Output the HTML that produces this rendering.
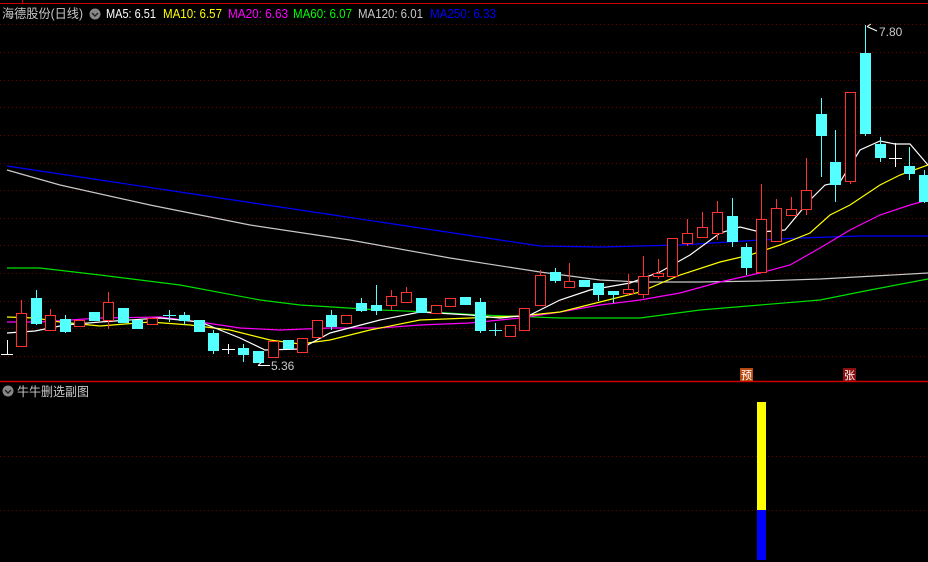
<!DOCTYPE html>
<html><head><meta charset="utf-8"><style>
html,body{margin:0;padding:0;background:#000;width:928px;height:562px;overflow:hidden}
svg{display:block}
text{font-family:"Liberation Sans","Noto Sans CJK SC",sans-serif}
</style></head><body>
<svg width="928" height="562" viewBox="0 0 928 562" xmlns="http://www.w3.org/2000/svg">
<rect width="928" height="562" fill="#000"/>
<line x1="0" y1="3.5" x2="928" y2="3.5" stroke="#c00" stroke-width="1"/>
<line x1="22.5" y1="0" x2="22.5" y2="4" stroke="#c00"/>
<g stroke="#6a0000" stroke-width="1" stroke-dasharray="1,3">
<line x1="0" y1="24.5" x2="928" y2="24.5"/><line x1="0" y1="52.5" x2="928" y2="52.5"/>
<line x1="0" y1="80.5" x2="928" y2="80.5"/><line x1="0" y1="107.5" x2="928" y2="107.5"/>
<line x1="0" y1="135.5" x2="928" y2="135.5"/><line x1="0" y1="163.5" x2="928" y2="163.5"/>
<line x1="0" y1="190.5" x2="928" y2="190.5"/><line x1="0" y1="218.5" x2="928" y2="218.5"/>
<line x1="0" y1="245.5" x2="928" y2="245.5"/><line x1="0" y1="273.5" x2="928" y2="273.5"/>
<line x1="0" y1="301.5" x2="928" y2="301.5"/><line x1="0" y1="328.5" x2="928" y2="328.5"/>
<line x1="0" y1="356.5" x2="928" y2="356.5"/>
<line x1="0" y1="456.5" x2="928" y2="456.5"/><line x1="0" y1="510.5" x2="928" y2="510.5"/>
</g>
<line x1="0" y1="381.5" x2="928" y2="381.5" stroke="#c00" stroke-width="1.5"/>

<g fill="none" stroke-width="1.2">
<polyline stroke="#0000ff" points="7,166 100,180 200,195 300,210 400,225 500,240 540,246 600,247 680,245 760,240 800,238 860,236 928,236"/>
<polyline stroke="#c8c8c8" points="7,170 60,185 150,205 250,225 350,240 450,258 540,272 600,280 640,282 700,282 760,281 820,279 928,273"/>
<polyline stroke="#00e000" points="7,268 40,268 100,275 180,285 260,300 300,305 380,310 430,312 480,315 560,318 640,318 700,310 760,305 820,300 870,290 928,279"/>
<polyline stroke="#ff00ff" points="7,322 40,322 100,318 160,317 200,322 240,328 280,330 330,328 380,328 420,325 470,323 520,318 560,312 600,305 640,300 680,293 720,282 760,273 790,265 820,248 850,230 880,215 910,205 928,200"/>
<polyline stroke="#ffff00" points="7,317 35,318 60,322 100,326 150,322 190,325 230,330 270,340 300,344 330,340 370,330 420,320 470,318 520,316 560,312 600,302 640,292 680,275 720,262 750,255 780,245 810,233 830,215 850,205 880,185 900,175 928,165"/>
<polyline stroke="#ffffff" points="7,333 35,331 65,325 100,322 160,318 200,322 240,338 265,350 300,349 330,333 380,320 420,312 470,315 500,318 530,315 560,300 590,290 630,283 660,272 690,255 720,233 740,227 760,232 785,230 810,200 825,185 840,182 860,150 880,141 895,144 910,144 928,165"/>
</g>

<g fill="#000" stroke="#ff3232" stroke-width="1">
<line x1="21.5" y1="300" x2="21.5" y2="313"/><rect x="16.5" y="313.5" width="10" height="33"/>
<line x1="50.5" y1="309" x2="50.5" y2="315"/><rect x="45.5" y="315.5" width="10" height="15"/>
<rect x="74.5" y="320.5" width="10" height="6"/>
<line x1="108.5" y1="292" x2="108.5" y2="329"/><rect x="103.5" y="302.5" width="10" height="18" />
<rect x="147.5" y="318.5" width="10" height="6"/>
<rect x="268.5" y="341.5" width="10" height="16"/>
<rect x="297.5" y="338.5" width="10" height="14"/>
<rect x="312.5" y="320.5" width="10" height="17"/>
<rect x="341.5" y="315.5" width="10" height="8"/>
<line x1="391.5" y1="290" x2="391.5" y2="310"/><rect x="386.5" y="296.5" width="10" height="9"/>
<line x1="406.5" y1="287" x2="406.5" y2="292"/><rect x="401.5" y="292.5" width="10" height="10"/>
<rect x="431.5" y="305.5" width="10" height="8"/>
<rect x="445.5" y="298.5" width="10" height="8"/>
<rect x="505.5" y="325.5" width="10" height="11"/>
<rect x="519.5" y="308.5" width="10" height="22"/>
<line x1="540.5" y1="270" x2="540.5" y2="275"/><rect x="535.5" y="275.5" width="10" height="30"/>
<line x1="569.5" y1="263" x2="569.5" y2="281"/><rect x="564.5" y="281.5" width="10" height="6"/>
<line x1="628.5" y1="274" x2="628.5" y2="295"/><rect x="623.5" y="289.5" width="10" height="4"/>
<line x1="643.5" y1="256" x2="643.5" y2="298"/><rect x="638.5" y="276.5" width="10" height="18"/>
<line x1="658.5" y1="259" x2="658.5" y2="279"/><rect x="653.5" y="273.5" width="10" height="3"/>
<rect x="667.5" y="238.5" width="10" height="38"/>
<line x1="687.5" y1="219" x2="687.5" y2="246"/><rect x="682.5" y="233.5" width="10" height="10"/>
<line x1="702.5" y1="212" x2="702.5" y2="227"/><rect x="697.5" y="227.5" width="10" height="10"/>
<line x1="717.5" y1="201" x2="717.5" y2="240"/><rect x="712.5" y="212.5" width="10" height="21"/>
<line x1="761.5" y1="184" x2="761.5" y2="219"/><rect x="756.5" y="219.5" width="10" height="53"/>
<line x1="776.5" y1="199" x2="776.5" y2="242"/><rect x="771.5" y="208.5" width="10" height="33"/>
<line x1="791.5" y1="197" x2="791.5" y2="209"/><rect x="786.5" y="209.5" width="10" height="6"/>
<line x1="806.5" y1="158" x2="806.5" y2="215"/><rect x="801.5" y="190.5" width="10" height="19"/>
<rect x="845.5" y="92.5" width="10" height="89"/><line x1="850.5" y1="182" x2="850.5" y2="184"/>
</g>
<g fill="#54ffff" stroke="#54ffff" stroke-width="1">
<line x1="36.5" y1="290" x2="36.5" y2="325"/><rect x="31.5" y="298.5" width="10" height="25"/>
<line x1="65.5" y1="315" x2="65.5" y2="333"/><rect x="60.5" y="319.5" width="10" height="12"/>
<rect x="89.5" y="312.5" width="10" height="8"/>
<rect x="118.5" y="308.5" width="10" height="14"/>
<rect x="132.5" y="320.5" width="10" height="8"/>
<line x1="169.5" y1="310" x2="169.5" y2="322"/><line x1="163" y1="315.5" x2="176" y2="315.5"/>
<line x1="184.5" y1="312" x2="184.5" y2="325"/><rect x="179.5" y="315.5" width="10" height="5"/>
<rect x="194.5" y="320.5" width="10" height="11"/>
<line x1="213.5" y1="330" x2="213.5" y2="354"/><rect x="208.5" y="333.5" width="10" height="17"/>
<line x1="243.5" y1="344" x2="243.5" y2="362"/><rect x="238.5" y="348.5" width="10" height="6"/>
<rect x="253.5" y="351.5" width="10" height="11"/>
<rect x="283.5" y="340.5" width="10" height="8"/>
<line x1="331.5" y1="310" x2="331.5" y2="330"/><rect x="326.5" y="315.5" width="10" height="11"/>
<line x1="361.5" y1="298" x2="361.5" y2="312"/><rect x="356.5" y="303.5" width="10" height="7"/>
<line x1="376.5" y1="285" x2="376.5" y2="315"/><rect x="371.5" y="305.5" width="10" height="5"/>
<rect x="416.5" y="298.5" width="10" height="14"/>
<rect x="460.5" y="297.5" width="10" height="7"/>
<line x1="480.5" y1="298" x2="480.5" y2="333"/><rect x="475.5" y="302.5" width="10" height="28"/>
<line x1="495.5" y1="323" x2="495.5" y2="336"/><line x1="489" y1="330.5" x2="502" y2="330.5"/>
<line x1="555.5" y1="268" x2="555.5" y2="283"/><rect x="550.5" y="272.5" width="10" height="8"/>
<rect x="579.5" y="280.5" width="10" height="6"/>
<line x1="598.5" y1="283" x2="598.5" y2="301"/><rect x="593.5" y="283.5" width="10" height="11"/>
<line x1="613.5" y1="291" x2="613.5" y2="303"/><rect x="608.5" y="291.5" width="10" height="3"/>
<line x1="732.5" y1="198" x2="732.5" y2="247"/><rect x="727.5" y="216.5" width="10" height="25"/>
<line x1="746.5" y1="243" x2="746.5" y2="275"/><rect x="741.5" y="247.5" width="10" height="20"/>
<line x1="821.5" y1="98" x2="821.5" y2="177"/><rect x="816.5" y="114.5" width="10" height="21"/>
<line x1="835.5" y1="130" x2="835.5" y2="202"/><rect x="830.5" y="162.5" width="10" height="22"/>
<line x1="865.5" y1="25" x2="865.5" y2="136"/><rect x="860.5" y="53.5" width="10" height="80"/>
<line x1="880.5" y1="137" x2="880.5" y2="162"/><rect x="875.5" y="144.5" width="10" height="13"/>
<line x1="909.5" y1="147" x2="909.5" y2="180"/><rect x="904.5" y="166.5" width="10" height="7"/>
<line x1="924.5" y1="170" x2="924.5" y2="203"/><rect x="919.5" y="175.5" width="10" height="26"/>
</g>
<g stroke="#fff" stroke-width="1">
<line x1="7.5" y1="340" x2="7.5" y2="355"/><line x1="1" y1="354.5" x2="13" y2="354.5"/>
<line x1="228.5" y1="344" x2="228.5" y2="354"/><line x1="222" y1="349.5" x2="235" y2="349.5"/>
<line x1="895.5" y1="143" x2="895.5" y2="167"/><line x1="889" y1="158.5" x2="902" y2="158.5"/>
<line x1="258" y1="365.5" x2="270" y2="365.5"/><line x1="258" y1="365.5" x2="262" y2="362"/>
<line x1="867" y1="26.5" x2="877" y2="31"/><line x1="867" y1="26.5" x2="871" y2="24"/>
</g>
<text x="271" y="370" fill="#c8c8c8" font-size="12">5.36</text>
<text x="879" y="36" fill="#c8c8c8" font-size="12">7.80</text>
<rect x="740" y="368" width="13" height="13" fill="#b84a10"/>
<text x="741" y="379" fill="#fff" font-size="11">预</text>
<rect x="843" y="368" width="13" height="13" fill="#8a1010"/>
<text x="844" y="379" fill="#fff" font-size="11">张</text>

<text x="2" y="18" font-size="12.5" fill="#c8c8c8" textLength="81" lengthAdjust="spacingAndGlyphs">海德股份(日线)</text>
<circle cx="95" cy="14" r="5.5" fill="#888"/><path d="M92 13l3 3 3-3" stroke="#222" stroke-width="1.4" fill="none"/>
<g font-size="12.5">
<text x="106" y="18" fill="#fff" textLength="50" lengthAdjust="spacingAndGlyphs">MA5: 6.51</text>
<text x="163" y="18" fill="#ffff00" textLength="59" lengthAdjust="spacingAndGlyphs">MA10: 6.57</text>
<text x="228" y="18" fill="#ff00ff" textLength="60" lengthAdjust="spacingAndGlyphs">MA20: 6.63</text>
<text x="293" y="18" fill="#00ff00" textLength="59" lengthAdjust="spacingAndGlyphs">MA60: 6.07</text>
<text x="358" y="18" fill="#c8c8c8" textLength="65" lengthAdjust="spacingAndGlyphs">MA120: 6.01</text>
<text x="430" y="18" fill="#0000ff" textLength="66" lengthAdjust="spacingAndGlyphs">MA250: 6.33</text>
</g>

<circle cx="8" cy="391" r="5.5" fill="#888"/><path d="M5 390l3 3 3-3" stroke="#222" stroke-width="1.4" fill="none"/>
<text x="17" y="396" fill="#c8c8c8" font-size="12.5" textLength="72" lengthAdjust="spacingAndGlyphs">牛牛删选副图</text>
<rect x="757" y="402" width="9" height="108" fill="#ffff00"/>
<rect x="757" y="510" width="9" height="50" fill="#0000ff"/>
</svg>
</body></html>
